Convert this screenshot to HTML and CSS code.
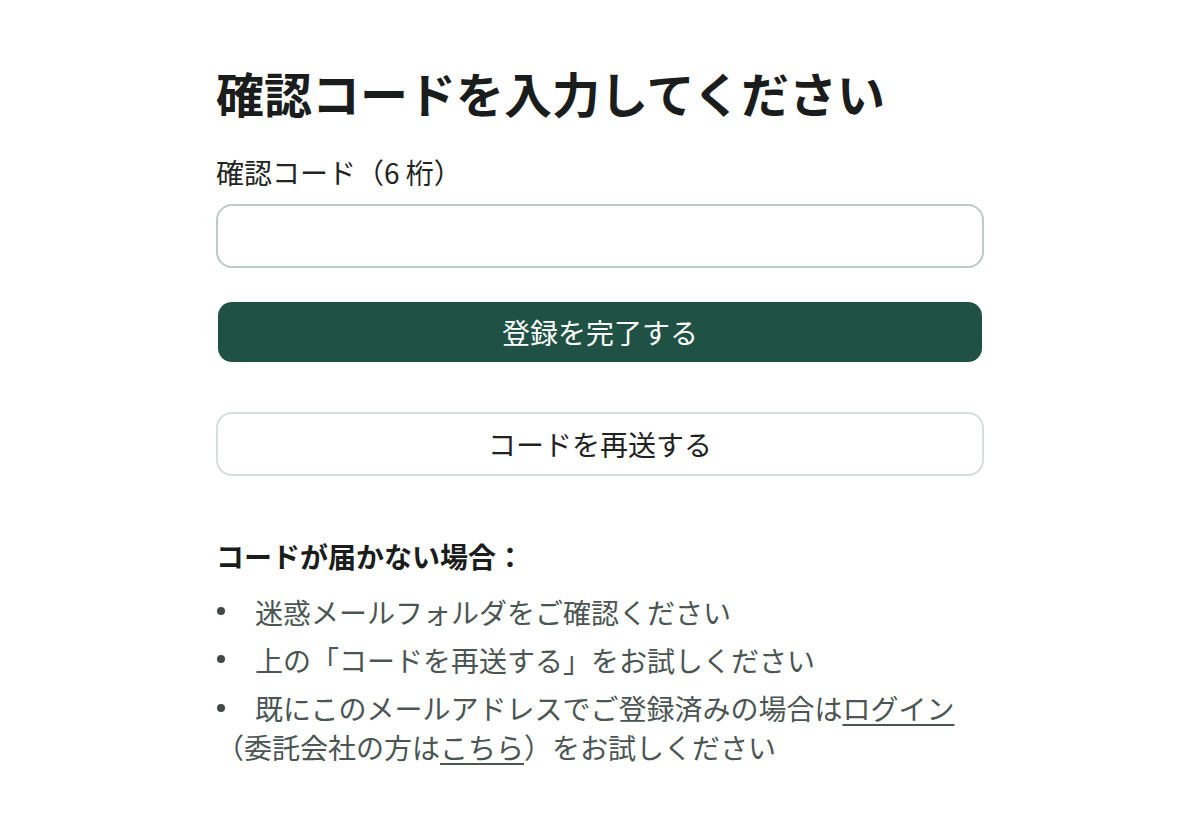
FILE: index.html
```html
<!DOCTYPE html>
<html lang="ja">
<head>
<meta charset="utf-8">
<title>確認コードを入力してください</title>
<link rel="stylesheet" href="styles.css">
</head>
<body>
<main class="page">
  <h1 class="title">確認コードを入力してください</h1>
  <form class="form">
    <label class="label" for="code">確認コード（6 桁）</label>
    <input class="input" id="code" type="text" inputmode="numeric">
    <button class="btn btn-primary" type="button">登録を完了する</button>
    <button class="btn btn-secondary" type="button">コードを再送する</button>
  </form>
  <section class="help">
    <h2 class="help-title">コードが届かない場合：</h2>
    <ul class="help-list">
      <li class="help-item">迷惑メールフォルダをご確認ください</li>
      <li class="help-item">上の「コードを再送する」をお試しください</li>
      <li class="help-item">既にこのメールアドレスでご登録済みの場合は<a class="link" href="#">ログイン</a>（委託会社の方は<a class="link" href="#">こちら</a>）をお試しください</li>
    </ul>
  </section>
</main>
</body>
</html>
```

FILE: styles.css
```css
* { box-sizing: border-box; }

html, body {
  margin: 0;
  padding: 0;
  background: #ffffff;
}

body {
  font-family: "Noto Sans CJK JP", "Noto Sans", sans-serif;
  color: #1d1f1f;
}

.page {
  width: 768px;
  margin: 0 auto;
  padding-top: 59px;
}

.title {
  margin: 0 0 27px;
  font-size: 48px;
  line-height: 1.4;
  font-weight: 700;
  color: #1b1c1c;
}

.form {
  display: flex;
  flex-direction: column;
}

.label {
  font-size: 28px;
  line-height: 1.4;
  color: #222424;
  margin-bottom: 12px;
}

.input {
  height: 64px;
  width: 100%;
  border: 2px solid #bfcac6;
  border-radius: 16px;
  padding: 0 20px;
  font: inherit;
  font-size: 28px;
  background: #fff;
  outline: none;
}

.btn {
  font-family: inherit;
  font-size: 28px;
  line-height: 1.4;
  cursor: pointer;
}

.btn-primary {
  margin: 34px 2px 0;
  height: 60px;
  border: none;
  border-radius: 14px;
  background: #1f5245;
  color: #ffffff;
}

.btn-secondary {
  margin-top: 50px;
  height: 64px;
  border: 2px solid #d6dddb;
  border-radius: 16px;
  background: #ffffff;
  color: #1f2222;
}

.help {
  margin-top: 61px;
}

.help-title {
  margin: 0 0 16px;
  font-size: 28px;
  line-height: 1.4;
  font-weight: 700;
  color: #1b1c1c;
}

.help-list {
  list-style: none;
  margin: 0;
  padding: 0;
}

.help-item {
  font-size: 28px;
  line-height: 1.4;
  color: #4b5553;
  margin-bottom: 9px;
}

.help-item::before {
  content: "";
  display: inline-block;
  width: 8px;
  height: 8px;
  border-radius: 50%;
  background: #3e4a47;
  margin: 0 30px 0 1px;
  vertical-align: 0.3em;
}

.link {
  color: #4b5553;
  text-decoration: underline;
  text-underline-offset: 4px;
  text-decoration-thickness: 2px;
}
```
